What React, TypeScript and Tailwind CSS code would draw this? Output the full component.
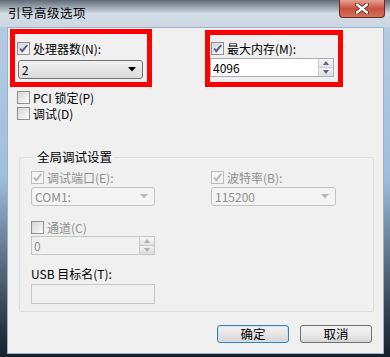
import React from "react";

function Check({ checked, disabled }: { checked?: boolean; disabled?: boolean }) {
  return (
    <span
      className={
        disabled
          ? "w-[13px] h-[13px] shrink-0 border border-[#bcbcbc] bg-[#f4f4f4] flex items-center justify-center"
          : "w-[13px] h-[13px] shrink-0 border border-[#8e8f8f] bg-gradient-to-br from-[#d6d6d6] to-[#fbfbfb] flex items-center justify-center"
      }
    >
      {checked && (
        <svg width="11" height="11" viewBox="0 0 11 11">
          <path
            d="M2 5.5 L4.3 8.2 L9.2 2"
            fill="none"
            stroke={disabled ? "#b6b6b6" : "#4a5e93"}
            strokeWidth="1.9"
          />
        </svg>
      )}
    </span>
  );
}

function CheckRow({
  label,
  checked,
  disabled,
  grey,
}: {
  label: string;
  checked?: boolean;
  disabled?: boolean;
  grey?: boolean;
}) {
  return (
    <div className="flex items-center gap-[3px] h-[13px]">
      <Check checked={checked} disabled={disabled} />
      <span className={grey ? "text-[#8f8f8f] leading-[13px]" : "text-black leading-[13px]"}>{label}</span>
    </div>
  );
}

function Arrow({ color }: { color: string }) {
  return (
    <svg width="8" height="5" viewBox="0 0 8 5">
      <path d="M0 0 H8 L4 4.5 Z" fill={color} />
    </svg>
  );
}

function Spin({ disabled }: { disabled?: boolean }) {
  const c = disabled ? "#b0b0b0" : "#5a6a80";
  return (
    <div className="w-[15px] h-full flex flex-col border-l border-[#c9ccd1]">
      <div className="flex-1 flex items-center justify-center bg-gradient-to-b from-[#f6f6f6] to-[#e2e2e2] border-b border-[#c9ccd1]">
        <svg width="6" height="4" viewBox="0 0 6 4">
          <path d="M0 4 H6 L3 0 Z" fill={c} />
        </svg>
      </div>
      <div className="flex-1 flex items-center justify-center bg-gradient-to-b from-[#f0f0f0] to-[#dedede]">
        <svg width="6" height="4" viewBox="0 0 6 4">
          <path d="M0 0 H6 L3 4 Z" fill={c} />
        </svg>
      </div>
    </div>
  );
}

export default function App() {
  return (
    <div className="relative w-[390px] h-[357px] overflow-hidden font-['Noto_Sans_CJK_SC',sans-serif] text-[12px] bg-gradient-to-b from-[#b9cde2] via-[#9fbedd] to-[#16202c]">
      {/* title bar */}
      <div className="h-[27px] flex items-center pl-[8px] bg-gradient-to-b from-[#5f6a75] via-[#d3dce5] to-[#cbd7e3]">
        <span className="text-[12.5px] tracking-[0.5px] text-black">引导高级选项</span>
      </div>
      <div className="absolute top-0 right-[5px] w-[46px] h-[18px] rounded-b-[4px] border border-t-0 border-[#6b2a22] bg-gradient-to-b from-[#e3a193] via-[#c9503e] to-[#d2705c] flex items-center justify-center">
        <svg width="14" height="11" viewBox="0 0 14 11">
          <path d="M2 1.5 L12 9.5 M12 1.5 L2 9.5" stroke="#5b2018" strokeWidth="4" strokeLinecap="round" />
          <path d="M2 1.5 L12 9.5 M12 1.5 L2 9.5" stroke="#ffffff" strokeWidth="2.4" strokeLinecap="round" />
        </svg>
      </div>

      {/* client area */}
      <div className="ml-[7px] w-[377px] h-[327px] bg-[#f0f0f0] border border-[#9fb1c4] flex flex-col">
        <div className="grid grid-cols-[194px_1fr] pt-[14px] pl-[9px]">
          <div className="flex flex-col">
            <CheckRow label="处理器数(N):" checked />
            <div className="mt-[5px] ml-[1px] w-[125px] h-[19px] rounded-[3px] border border-[#707070] bg-gradient-to-b from-[#f3f3f3] to-[#dadada] flex items-center pl-[3px] pr-[6px]">
              <span className="flex-1 leading-none">2</span>
              <Arrow color="#000000" />
            </div>
            <div className="mt-[12px]">
              <CheckRow label="PCI 锁定(P)" />
            </div>
            <div className="mt-[3px]">
              <CheckRow label="调试(D)" />
            </div>
          </div>
          <div className="flex flex-col">
            <CheckRow label="最大内存(M):" checked />
            <div className="mt-[3px] -ml-[1px] w-[124px] h-[19px] border border-[#abadb3] bg-white flex items-center">
              <span className="flex-1 pl-[2px] leading-none">4096</span>
              <Spin />
            </div>
          </div>
        </div>

        {/* group box */}
        <fieldset className="mt-[29px] ml-[11px] w-[355px] h-[163px] border border-[#d5dfe5] rounded-[2px] px-[11px] pb-[8px]">
          <legend className="ml-[4px] px-[2px] leading-[16px] text-[12.5px] text-black">全局调试设置</legend>
          <div className="grid grid-cols-[180px_1fr] mt-[6px]">
            <div className="flex flex-col">
              <CheckRow label="调试端口(E):" checked disabled grey />
              <div className="mt-[3px] w-[124px] h-[19px] rounded-[3px] border border-[#c3c3c3] bg-[#f4f4f4] flex items-center pl-[3px] pr-[6px] text-[#8d8d8d]">
                <span className="flex-1 leading-none">COM1:</span>
                <Arrow color="#b8b8b8" />
              </div>
              <div className="mt-[15px]">
                <CheckRow label="通道(C)" grey />
              </div>
              <div className="mt-[2px] w-[124px] h-[19px] border border-[#c6c6c6] bg-[#f0f0f0] flex items-center text-[#8d8d8d]">
                <span className="flex-1 pl-[2px] leading-none">0</span>
                <Spin disabled />
              </div>
              <div className="mt-[11px] leading-[16px] text-black">USB 目标名(T):</div>
              <div className="mt-[2px] w-[124px] h-[20px] border border-[#c6c6c6] bg-[#f0f0f0]" />
            </div>
            <div className="flex flex-col">
              <CheckRow label="波特率(B):" checked disabled grey />
              <div className="mt-[3px] w-[125px] h-[19px] rounded-[3px] border border-[#c3c3c3] bg-[#f4f4f4] flex items-center pl-[3px] pr-[6px] text-[#8d8d8d]">
                <span className="flex-1 leading-none">115200</span>
                <Arrow color="#b8b8b8" />
              </div>
            </div>
          </div>
        </fieldset>

        {/* buttons */}
        <div className="mt-[13px] flex justify-end gap-[11px] pr-[11px]">
          <button className="w-[72px] h-[18px] rounded-[3px] border border-[#3c7fb1] bg-gradient-to-b from-[#f2f2f2] via-[#e6e6e6] to-[#d4d4d4] text-[12.5px] leading-none shadow-[inset_0_0_0_1px_#c5e4f7]">
            确定
          </button>
          <button className="w-[72px] h-[18px] rounded-[3px] border border-[#707070] bg-gradient-to-b from-[#f2f2f2] via-[#ebebeb] to-[#d6d6d6] text-[12.5px] leading-none">
            取消
          </button>
        </div>
      </div>

      {/* red annotation boxes */}
      <div className="absolute left-[10px] top-[29px] w-[142px] h-[58px] border-[5px] border-[#ff0000]" />
      <div className="absolute left-[205px] top-[30px] w-[138px] h-[57px] border-[5px] border-[#ff0000]" />
    </div>
  );
}
